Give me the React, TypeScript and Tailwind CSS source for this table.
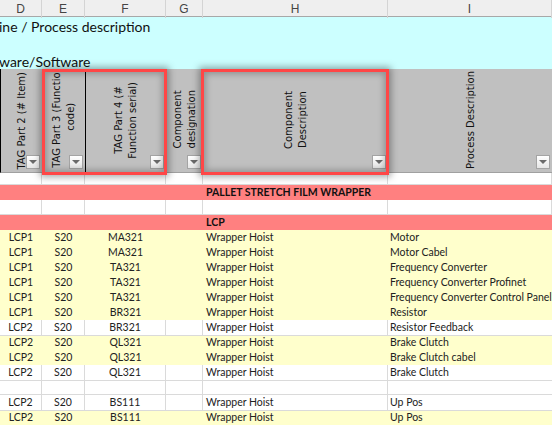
import React from 'react';

const cols = ['D', 'E', 'F', 'G', 'H', 'I'];
const grid = 'grid grid-cols-[42px_43px_81px_37px_185px_164px]';

type Row = { a: string; b: string; c: string; h: string; i: string; fill: boolean };

const rows: Row[] = [
  { a: 'LCP1', b: 'S20', c: 'MA321', h: 'Wrapper Hoist', i: 'Motor', fill: true },
  { a: 'LCP1', b: 'S20', c: 'MA321', h: 'Wrapper Hoist', i: 'Motor Cabel', fill: true },
  { a: 'LCP1', b: 'S20', c: 'TA321', h: 'Wrapper Hoist', i: 'Frequency Converter', fill: true },
  { a: 'LCP1', b: 'S20', c: 'TA321', h: 'Wrapper Hoist', i: 'Frequency Converter Profinet', fill: true },
  { a: 'LCP1', b: 'S20', c: 'TA321', h: 'Wrapper Hoist', i: 'Frequency Converter Control Panel', fill: true },
  { a: 'LCP1', b: 'S20', c: 'BR321', h: 'Wrapper Hoist', i: 'Resistor', fill: true },
  { a: 'LCP2', b: 'S20', c: 'BR321', h: 'Wrapper Hoist', i: 'Resistor Feedback', fill: false },
  { a: 'LCP2', b: 'S20', c: 'QL321', h: 'Wrapper Hoist', i: 'Brake Clutch', fill: true },
  { a: 'LCP2', b: 'S20', c: 'QL321', h: 'Wrapper Hoist', i: 'Brake Clutch cabel', fill: true },
  { a: 'LCP2', b: 'S20', c: 'QL321', h: 'Wrapper Hoist', i: 'Brake Clutch', fill: false },
  { a: '', b: '', c: '', h: '', i: '', fill: false },
  { a: 'LCP2', b: 'S20', c: 'BS111', h: 'Wrapper Hoist', i: 'Up Pos', fill: false },
  { a: 'LCP2', b: 'S20', c: 'BS111', h: 'Wrapper Hoist', i: 'Up Pos', fill: true },
];

function Dropdown() {
  return (
    <div className="absolute bottom-[3px] right-[2px] w-[14px] h-[14px] bg-gradient-to-b from-white to-[#e6e6e6] border border-[#a4a4a4] flex items-center justify-center">
      <div className="w-0 h-0 border-l-[4px] border-r-[4px] border-t-[4px] border-l-transparent border-r-transparent border-t-[#6a6a6a]" />
    </div>
  );
}

// align: center = centred in cell, start = anchored near bottom, low = bottom with room for the button
function HeadCell({ lines, align = 'center' }: { lines: string[]; align?: 'center' | 'start' | 'low' }) {
  const outer =
    align === 'center' ? 'items-center' : align === 'start' ? 'items-end pb-[4px]' : 'items-end pb-[24px]';
  const inner = align === 'low' ? 'text-left' : 'text-center';
  return (
    <div className={`relative h-full border-r border-black overflow-hidden flex justify-center ${outer}`}>
      <div className={`[writing-mode:vertical-rl] rotate-180 whitespace-nowrap text-[10px] leading-[14px] text-[#111] shrink-0 ${inner}`}>
        {lines.map((l, k) => (
          <div key={k}>{l}</div>
        ))}
      </div>
      <Dropdown />
    </div>
  );
}

function WhiteRow({ h = 'h-[15px]' }: { h?: string }) {
  return (
    <div className={`${grid} ${h} bg-white`}>
      {cols.map((c) => (
        <div key={c} className="border-r border-b border-[#dadada]" />
      ))}
    </div>
  );
}

function PinkRow({ label }: { label: string }) {
  return (
    <div className={`${grid} h-[15px] bg-[#ff8080]`}>
      <div className="col-span-4" />
      <div className="col-span-2 pl-[3px] font-bold text-[10.5px] leading-[15px] text-[#111] whitespace-nowrap">{label}</div>
    </div>
  );
}

export default function App() {
  return (
    <div
      className="relative w-[552px] h-[426px] overflow-hidden bg-white"
      style={{ fontFamily: 'Lato, "Liberation Sans", sans-serif' }}
    >
      {/* column letters */}
      <div className={`${grid} h-[17px] bg-[#efefef] border-b border-[#a8a8a8]`}>
        {cols.map((c) => (
          <div
            key={c}
            className="border-r border-[#d4d4d4] flex items-center justify-center text-[12px] text-[#444]"
            style={{ fontFamily: '"Liberation Sans", sans-serif' }}
          >
            {c}
          </div>
        ))}
      </div>

      {/* cyan title block */}
      <div className="h-[52px] bg-[#ccffff] text-[14px] text-[#111] leading-[17px] overflow-hidden">
        <div className="ml-[-1px] pt-[1px]">ine / Process description</div>
        <div className="mt-[18px] ml-[-1px]">ware/Software</div>
      </div>

      {/* filter header */}
      <div
        className={`${grid} h-[104px] bg-[#c0c0c0] border-b border-[#a0a0a0] border-l border-l-black`}
        style={{ fontFamily: '"DejaVu Sans", sans-serif' }}
      >
        <HeadCell lines={['TAG Part 2 (# Item)']} />
        <HeadCell lines={['TAG Part 3 (Function', 'code)']} align="start" />
        <HeadCell lines={['TAG Part 4 (#', 'Function serial)']} />
        <HeadCell lines={['Component', 'designation']} align="low" />
        <HeadCell lines={['Component', 'Description']} />
        <HeadCell lines={['Process Description']} />
      </div>

      <WhiteRow h="h-[12px]" />
      <PinkRow label="PALLET STRETCH FILM WRAPPER" />
      <WhiteRow />
      <PinkRow label="LCP" />

      {rows.map((r, k) => (
        <div key={k} className={`${grid} h-[15px] text-[10.5px] leading-[15px] text-[#222] ${r.fill ? 'bg-[#ffffcc]' : 'bg-white'}`}>
          {[r.a, r.b, r.c].map((v, j) => (
            <div key={j} className={`text-center ${r.fill ? '' : 'border-r border-b border-[#dadada]'}`}>
              {v}
            </div>
          ))}
          <div className={r.fill ? '' : 'border-r border-b border-[#dadada]'} />
          <div className={`pl-[3px] whitespace-nowrap ${r.fill ? '' : 'border-r border-b border-[#dadada]'}`}>{r.h}</div>
          <div className={`pl-[2px] whitespace-nowrap ${r.fill ? '' : 'border-b border-[#dadada]'}`}>{r.i}</div>
        </div>
      ))}

      {/* selection boxes */}
      <div className="absolute left-[42px] top-[69px] w-[125px] h-[106px] border-[3px] border-[#ff4646] shadow-[0_0_7px_2px_rgba(0,0,0,0.35),inset_0_0_6px_2px_rgba(0,0,0,0.25)]" />
      <div className="absolute left-[201px] top-[69px] w-[188px] h-[106px] border-[3px] border-[#ff4646] shadow-[0_0_7px_2px_rgba(0,0,0,0.35),inset_0_0_6px_2px_rgba(0,0,0,0.25)]" />
    </div>
  );
}
